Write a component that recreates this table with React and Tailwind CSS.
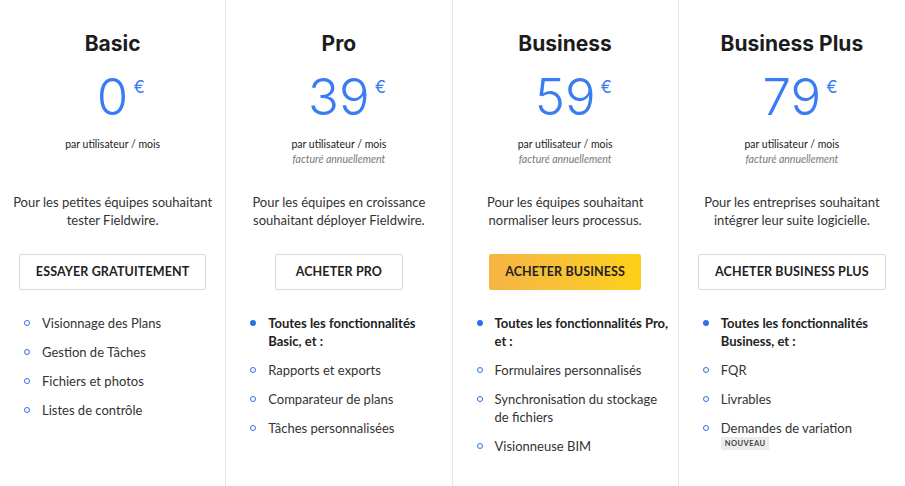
const plans = [
  {
    name: 'Basic',
    price: '0',
    billed: false,
    desc: ['Pour les petites équipes souhaitant', 'tester Fieldwire.'],
    cta: 'Essayer gratuitement',
    primary: false,
    features: [
      { text: 'Visionnage des Plans' },
      { text: 'Gestion de Tâches' },
      { text: 'Fichiers et photos' },
      { text: 'Listes de contrôle' },
    ],
  },
  {
    name: 'Pro',
    price: '39',
    billed: true,
    desc: ['Pour les équipes en croissance', 'souhaitant déployer Fieldwire.'],
    cta: 'Acheter Pro',
    primary: false,
    features: [
      { text: 'Toutes les fonctionnalités Basic, et :', bold: true },
      { text: 'Rapports et exports' },
      { text: 'Comparateur de plans' },
      { text: 'Tâches personnalisées' },
    ],
  },
  {
    name: 'Business',
    price: '59',
    billed: true,
    desc: ['Pour les équipes souhaitant', 'normaliser leurs processus.'],
    cta: 'Acheter Business',
    primary: true,
    features: [
      { text: 'Toutes les fonctionnalités Pro, et :', bold: true },
      { text: 'Formulaires personnalisés' },
      { text: 'Synchronisation du stockage de fichiers' },
      { text: 'Visionneuse BIM' },
    ],
  },
  {
    name: 'Business Plus',
    price: '79',
    billed: true,
    desc: ['Pour les entreprises souhaitant', 'intégrer leur suite logicielle.'],
    cta: 'Acheter Business Plus',
    primary: false,
    features: [
      { text: 'Toutes les fonctionnalités Business, et :', bold: true },
      { text: 'FQR' },
      { text: 'Livrables' },
      { text: 'Demandes de variation', badge: 'Nouveau' },
    ],
  },
]

function Feature({ item }) {
  return (
    <li className="flex items-start">
      <span className="flex h-[18px] w-[18px] shrink-0 items-center">
        <span
          className={
            item.bold
              ? 'block h-[6px] w-[6px] rounded-full bg-[#2f6fed]'
              : 'block h-[6px] w-[6px] rounded-full border-[1.5px] border-[#2f6fed]'
          }
        />
      </span>
      <div>
        <p className={item.bold ? 'font-bold text-[#222]' : 'text-[#333]'}>{item.text}</p>
        {item.badge && (
          <span className="block w-fit bg-[#ececec] px-[4px] text-[7.5px] font-bold uppercase leading-[13px] tracking-[0.06em] text-[#444]">
            {item.badge}
          </span>
        )}
      </div>
    </li>
  )
}

function PlanColumn({ plan, last }) {
  return (
    <div
      className={
        'flex flex-col items-center pt-[30px] ' + (last ? '' : 'border-r border-[#e6e6e6]')
      }
    >
      <h2 className="font-['Inter',sans-serif] text-[21px] font-bold leading-7 text-[#1c1c1e]">
        {plan.name}
      </h2>
      {/* euro sign hangs off the right so the digits stay centred */}
      <div className="relative mt-[13px] font-['Inter',sans-serif] text-[#3a7cf4]">
        <span className="block text-[51px] font-light leading-none">{plan.price}</span>
        <span className="absolute left-full top-[8px] ml-[5px] text-[17px] font-normal leading-none">
          €
        </span>
      </div>
      <div className="mt-[15px] h-[30px] text-center text-[10.5px] leading-[15px]">
        <p className="text-[#222]">par utilisateur / mois</p>
        {plan.billed && <p className="italic text-[#777]">facturé annuellement</p>}
      </div>
      <p className="mt-[26px] text-center text-[13px] leading-[18px] text-[#333]">
        {plan.desc[0]}
        <br />
        {plan.desc[1]}
      </p>
      <button
        className={
          'mt-[25px] h-9 min-w-[128px] rounded-[2px] px-4 text-[12.5px] font-bold uppercase tracking-[0.01em] text-[#222] ' +
          (plan.primary
            ? 'bg-gradient-to-r from-[#f5b444] to-[#fdd013]'
            : 'border border-[#d9d9dc] bg-white')
        }
      >
        {plan.cta}
      </button>
      <ul className="mt-[24px] flex w-full flex-col gap-[11px] pl-[24px] pr-[8px] text-[13px] leading-[18px]">
        {plan.features.map((f) => (
          <Feature key={f.text} item={f} />
        ))}
      </ul>
    </div>
  )
}

export default function App() {
  return (
    <div className="grid h-[486px] w-[905px] grid-cols-4 bg-white font-['Lato',sans-serif]">
      {plans.map((p, i) => (
        <PlanColumn key={p.name} plan={p} last={i === plans.length - 1} />
      ))}
    </div>
  )
}
